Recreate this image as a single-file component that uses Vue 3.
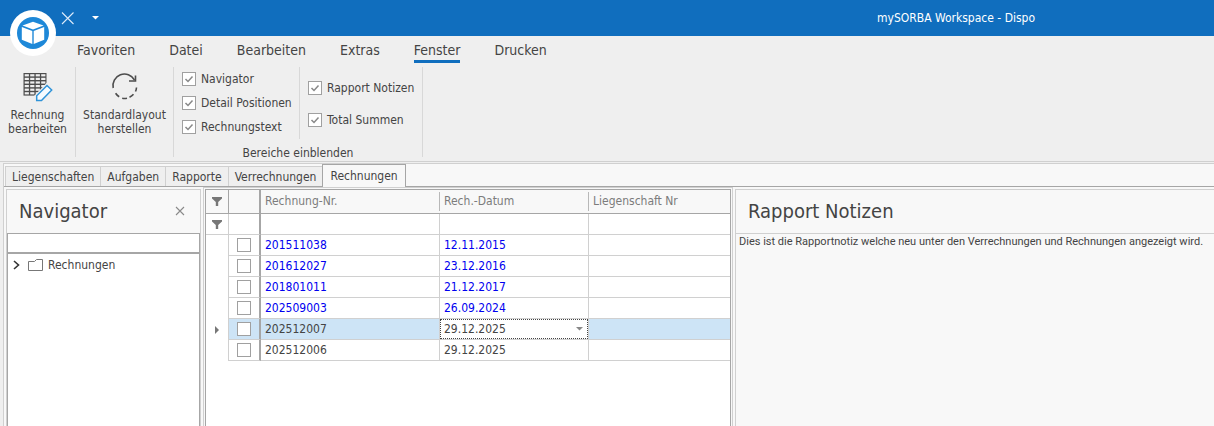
<script setup>
import { ref } from 'vue'

const menu = ['Favoriten', 'Datei', 'Bearbeiten', 'Extras', 'Fenster', 'Drucken']
const activeMenu = ref('Fenster')

const areasLeft = ref([
  { label: 'Navigator', on: true },
  { label: 'Detail Positionen', on: true },
  { label: 'Rechnungstext', on: true },
])
const areasRight = ref([
  { label: 'Rapport Notizen', on: true },
  { label: 'Total Summen', on: true },
])

const tabs = ['Liegenschaften', 'Aufgaben', 'Rapporte', 'Verrechnungen', 'Rechnungen']
const activeTab = ref('Rechnungen')

const search = ref('')
const rows = ref([
  { nr: '201511038', date: '12.11.2015', open: true, picked: false },
  { nr: '201612027', date: '23.12.2016', open: true, picked: false },
  { nr: '201801011', date: '21.12.2017', open: true, picked: false },
  { nr: '202509003', date: '26.09.2024', open: true, picked: false },
  { nr: '202512007', date: '29.12.2025', open: false, picked: false },
  { nr: '202512006', date: '29.12.2025', open: false, picked: false },
])
const selected = ref('202512007')
</script>

<template>
  <div class="app">
    <header class="titlebar">
      <div class="quick">
        <button class="quick-btn" aria-label="Schliessen">
          <svg width="14" height="14" viewBox="0 0 14 14"><path d="M1 1.5 12.5 13M12.5 1.5 1 13" stroke="#dcebfa" stroke-width="1.1" fill="none" /></svg>
        </button>
        <button class="quick-btn" aria-label="Schnellzugriff anpassen">
          <svg width="7" height="4" viewBox="0 0 7 4"><path d="M0 0h7L3.500 3.500z" fill="#fff" /></svg>
        </button>
      </div>
      <span class="title">mySORBA Workspace - Dispo</span>
      <svg class="logo" width="46" height="46" viewBox="0 0 46 46">
        <circle cx="23" cy="23" r="23" fill="#fff" />
        <circle cx="23" cy="23" r="16" fill="#1e88d8" />
        <path d="M23 11.800 33.500 15.600 23 19.600 12.500 15.600z" fill="#fff" />
        <path d="M11.800 17 22.300 21v13L11.800 29.800z" fill="#fff" />
        <path d="M34.200 17 23.700 21v13l10.500-4.200z" fill="#fff" />
      </svg>
    </header>

    <nav class="menu">
      <button v-for="m in menu" :key="m" class="menu-item" :class="{ active: m === activeMenu }" @click="activeMenu = m">{{ m }}</button>
    </nav>

    <section class="ribbon">
      <div class="group group-edit">
        <button class="big">
          <svg width="30" height="30" viewBox="0 0 30 30">
            <rect x=".5" y="1" width="23" height="22.600" fill="#4d4d4d" />
            <template v-for="r in 6" :key="r">
              <rect v-for="c in 4" :key="c" :x="1.700 + (c - 1) * 5.500" :y="2.200 + (r - 1) * 3.600" width="4.200" height="2.200" fill="#efefef" />
            </template>
            <path d="M11.500 30v-6.500L24 10.500l6 6V30z" fill="#efefef" />
            <path d="M13.700 28.500v-4.800L24 13.500l4.700 4.500-10.200 10.500z" fill="#f6fbff" stroke="#2f93d8" stroke-width="1.500" />
          </svg>
          <span>Rechnung<br>bearbeiten</span>
        </button>
      </div>
      <div class="group group-layout">
        <button class="big">
          <svg width="30" height="30" viewBox="0 0 30 30" fill="none" stroke="#4d4d4d" stroke-width="1.600">
            <path d="M3.200 16A11.500 11.500 0 0 1 24.500 8" />
            <path d="M25.500 3.500V9H19" />
            <path d="M26.500 15.500a11.500 11.500 0 0 1-1 4M23.500 22.300a11.500 11.500 0 0 1-4 3M17 26.300a11.500 11.500 0 0 1-4.800 0M9.200 24.800a11.500 11.500 0 0 1-3.600-3.600" />
          </svg>
          <span>Standardlayout<br>herstellen</span>
        </button>
      </div>
      <div class="group group-areas">
        <div class="checks">
          <div class="check-col">
            <label v-for="a in areasLeft" :key="a.label" class="check">
              <input v-model="a.on" type="checkbox" class="box">
              <svg v-if="a.on" class="tick" width="14" height="14" viewBox="0 0 14 14"><path d="M3.500 7 6 9.500 10.500 4.500" fill="none" stroke="#888" stroke-width="1.500" /></svg>
              <span>{{ a.label }}</span>
            </label>
          </div>
          <div class="check-col second">
            <label v-for="a in areasRight" :key="a.label" class="check">
              <input v-model="a.on" type="checkbox" class="box">
              <svg v-if="a.on" class="tick" width="14" height="14" viewBox="0 0 14 14"><path d="M3.500 7 6 9.500 10.500 4.500" fill="none" stroke="#888" stroke-width="1.500" /></svg>
              <span>{{ a.label }}</span>
            </label>
          </div>
        </div>
        <div class="caption">Bereiche einblenden</div>
      </div>
    </section>

    <main class="workspace">
      <div class="tabs">
        <button v-for="t in tabs" :key="t" class="tab" :class="{ active: t === activeTab }" @click="activeTab = t">{{ t }}</button>
      </div>

      <div class="panes">
        <aside class="navigator">
          <div class="pane-head">
            <h2>Navigator</h2>
            <button class="close" aria-label="Navigator schliessen">
              <svg width="10" height="10" viewBox="0 0 10 10"><path d="M1 1l8 8M9 1 1 9" stroke="#8a8a8a" stroke-width="1.100" fill="none" /></svg>
            </button>
          </div>
          <input v-model="search" class="search" type="text" aria-label="Suche">
          <div class="tree">
            <button class="node">
              <svg width="7" height="10" viewBox="0 0 7 10"><path d="M1 1l4.500 4L1 9" stroke="#333" stroke-width="1.600" fill="none" /></svg>
              <svg class="folder" width="15" height="12" viewBox="0 0 15 12"><path d="M.5 11.500v-9h6l2-2h6v11z" stroke="#777" fill="none" /></svg>
              <span>Rechnungen</span>
            </button>
          </div>
        </aside>

        <section class="grid-frame">
          <div class="grid-pane">
            <table>
              <colgroup><col class="c1"><col class="c2"><col class="c3"><col class="c4"><col></colgroup>
              <thead>
                <tr class="head">
                  <th class="ind"><svg width="10" height="9" viewBox="0 0 10 9"><path d="M0 0h10v1.500L6.200 5v4H3.800V5L0 1.500z" fill="#777" /></svg></th>
                  <th class="pick"></th>
                  <th><span>Rechnung-Nr.</span></th>
                  <th><span>Rech.-Datum</span></th>
                  <th class="last"><span>Liegenschaft Nr</span></th>
                </tr>
              </thead>
              <tbody>
                <tr class="filter">
                  <td class="ind"><svg width="10" height="9" viewBox="0 0 10 9"><path d="M0 0h10v1.500L6.200 5v4H3.800V5L0 1.500z" fill="#777" /></svg></td>
                  <td class="pick"></td>
                  <td></td>
                  <td></td>
                  <td class="last"></td>
                </tr>
                <tr v-for="r in rows" :key="r.nr" class="row" :class="{ open: r.open, selected: r.nr === selected }">
                  <td class="ind"><svg v-if="r.nr === selected" width="4" height="8" viewBox="0 0 4 8"><path d="M0 0l4 4-4 4z" fill="#777" /></svg></td>
                  <td class="pick"><input v-model="r.picked" type="checkbox" class="box" :aria-label="'Rechnung ' + r.nr"></td>
                  <td>{{ r.nr }}</td>
                  <td v-if="r.nr === selected" class="editing">
                    <div class="editor">
                      <input v-model="r.date" type="text" aria-label="Rech.-Datum">
                      <button aria-label="Kalender öffnen"><svg width="7" height="4" viewBox="0 0 7 4"><path d="M0 0h7L3.500 3.500z" fill="#888" /></svg></button>
                    </div>
                  </td>
                  <td v-else>{{ r.date }}</td>
                  <td class="last"></td>
                </tr>
              </tbody>
            </table>
          </div>
        </section>

        <section class="notes">
          <div class="pane-head"><h2>Rapport Notizen</h2></div>
          <p>Dies ist die Rapportnotiz welche neu unter den Verrechnungen und Rechnungen angezeigt wird.</p>
        </section>
      </div>
    </main>
  </div>
</template>

<style>
body {
  margin: 0;
  overflow: hidden;
}
</style>

<style scoped>
* {
  box-sizing: border-box;
}
.app {
  display: flex;
  flex-direction: column;
  height: 100vh;
  background: #efefef;
  color: #444;
  font: 12px/14px "DejaVu Sans Condensed", Tahoma, "Noto Sans", sans-serif;
}
button {
  border: 0;
  padding: 0;
  background: none;
  color: inherit;
  font: inherit;
  white-space: nowrap;
}
svg {
  display: block;
}
.titlebar {
  position: relative;
  flex: none;
  display: flex;
  align-items: center;
  height: 36px;
  background: #106ebe;
  color: #fff;
}
.quick {
  display: flex;
  align-items: center;
  gap: 17px;
  width: 137px;
  height: 36px;
  padding-left: 61px;
}
.title {
  margin-left: auto;
  width: 337px;
}
.logo {
  position: absolute;
  left: 10px;
  top: 10px;
}
.menu {
  flex: none;
  display: flex;
  gap: 34px;
  height: 31px;
  padding-left: 77px;
}
.menu-item {
  height: 27px;
  padding-top: 3px;
  border-bottom: 3px solid transparent;
  font-size: 14px;
}
.menu-item.active {
  border-color: #106ebe;
}
.ribbon {
  flex: none;
  display: flex;
  height: 95px;
  padding-bottom: 4px;
  border-bottom: 1px solid #d0d0d0;
}
.group {
  border-right: 1px solid #d8d8d8;
}
.group-edit {
  width: 76px;
}
.group-layout {
  width: 98px;
}
.group-areas {
  width: 249px;
}
.big {
  display: flex;
  flex-direction: column;
  align-items: center;
  gap: 6px;
  width: 100%;
  padding-top: 5px;
}
.checks {
  display: flex;
  height: 72px;
}
.check-col {
  flex: none;
  display: flex;
  flex-direction: column;
  justify-content: space-around;
  width: 126px;
  padding-left: 8px;
  border-right: 1px solid #d8d8d8;
}
.check-col.second {
  flex: 1;
  width: auto;
  justify-content: center;
  gap: 18px;
  border: 0;
  padding-top: 1px;
}
.check {
  position: relative;
  display: flex;
  align-items: center;
  gap: 5px;
  white-space: nowrap;
}
.box {
  appearance: none;
  flex: none;
  display: block;
  width: 14px;
  height: 14px;
  margin: 0;
  border: 1px solid #a0a0a0;
  background: #fff;
}
.tick {
  position: absolute;
  left: 0;
  top: 0;
  pointer-events: none;
}
.caption {
  padding-top: 7px;
  text-align: center;
}
.workspace {
  flex: 1;
  min-height: 0;
  display: flex;
  flex-direction: column;
  margin: 1px 0 0 3px;
  border: solid #d0d0d0;
  border-width: 1px 0 0 1px;
  background: #f8f8f8;
}
.tabs {
  flex: none;
  display: flex;
  align-items: flex-end;
  height: 23px;
  padding-left: 1px;
  border-bottom: 1px solid #a6a6a6;
}
.tab {
  height: 20px;
  padding: 0 6px;
  border: 1px solid #d0d0d0;
  border-width: 1px 1px 0 1px;
  background: #efefef;
  margin-right: -1px;
}
.tab.active {
  height: 23px;
  margin-bottom: -1px;
  padding: 0 7px;
  border-color: #a6a6a6;
  background: #f8f8f8;
}
.panes {
  flex: 1;
  min-height: 0;
  display: flex;
  gap: 2px;
  padding-left: 2px;
}
.navigator {
  flex: none;
  display: flex;
  flex-direction: column;
  width: 195px;
  margin-top: 2px;
  border: 1px solid #d0d0d0;
  border-bottom: 0;
}
.pane-head {
  flex: none;
  display: flex;
  align-items: center;
  justify-content: space-between;
  height: 43px;
  padding: 0 15px 2px 12px;
}
h2 {
  margin: 0;
  font-size: 20px;
  line-height: 24px;
  font-weight: 400;
}
.search {
  flex: none;
  width: 100%;
  height: 21px;
  border: 1px solid #a6a6a6;
  border-bottom-width: 2px;
  background: #fff;
  font: inherit;
}
.tree {
  flex: 1;
  padding: 4px 5px;
  border: solid #a6a6a6;
  border-width: 0 1px;
  background: #fff;
}
.node {
  display: flex;
  align-items: center;
}
.folder {
  margin: 0 5px 0 8px;
}
.grid-frame {
  flex: none;
  display: flex;
  width: 530px;
  padding: 1px 1px 0;
  border: 1px solid #d0d0d0;
  border-bottom: 0;
}
.grid-pane {
  flex: 1;
  border: 1px solid #a6a6a6;
  border-bottom: 0;
  background: #fff;
}
table {
  width: 100%;
  table-layout: fixed;
  border-spacing: 0;
}
.c1 { width: 23px; }
.c2 { width: 32px; }
.c3 { width: 179px; }
.c4 { width: 149px; }
td,
th {
  height: 21px;
  padding: 0 4px;
  border: solid #d0d0d0;
  border-width: 0 1px 1px 0;
  text-align: left;
  font-weight: 400;
}
.head th {
  height: 24px;
  padding: 2px 0;
  border-right: 0;
  border-bottom-color: #a6a6a6;
  background: #f8f8f8;
  color: #7c7c7c;
}
.head span {
  display: block;
  height: 19px;
  padding-left: 4px;
  border-right: 1px solid #b8b8b8;
  line-height: 19px;
}
.head .last span,
td.last {
  border-right: 0;
}
.head .ind {
  border-right: 1px solid #a6a6a6;
}
td.pick,
.head th.pick {
  border-right: 2px solid #a6a6a6;
}
.pick {
  padding: 0 8px;
}
td.ind {
  padding: 0;
}
.row .ind {
  border-bottom: 0;
}
.ind svg {
  margin: 0 auto;
}
.open {
  color: #0000f0;
}
.selected td:not(.ind) {
  background: #cde4f6;
}
td.editing {
  padding: 0;
}
.editor {
  display: flex;
  align-items: center;
  height: 20px;
  padding: 0 4px 0 3px;
  border: 1px dotted #444;
  background: #fff;
}
.editor input {
  flex: 1;
  min-width: 0;
  padding: 0;
  border: 0;
  outline: 0;
  background: none;
  color: inherit;
  font: inherit;
}
.notes {
  flex: 1;
  min-width: 0;
  margin-top: 2px;
  border: solid #d0d0d0;
  border-width: 1px 0 0 1px;
}
.notes .pane-head {
  border-bottom: 1px solid #d0d0d0;
  height: 44px;
}
.notes p {
  margin: 0;
  padding: 1px 3px;
  font-family: Roboto, sans-serif;
  font-size: 11px;
}
</style>
